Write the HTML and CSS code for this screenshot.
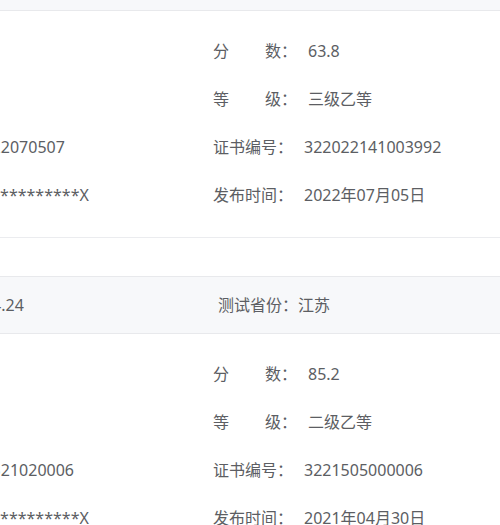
FILE: index.html
```html
<!DOCTYPE html>
<html lang="zh-CN">
<head>
<meta charset="utf-8">
<title>证书查询结果</title>
<link rel="stylesheet" href="styles.css">
</head>
<body>
<div class="page">
  <section class="card card-first">
    <div class="band">
      <div class="band-item">测试时间：2022.05.29</div>
      <div class="band-item">测试省份：江苏</div>
    </div>
    <div class="body">
      <div class="row">
        <div class="cell"><span class="lbl split"><span>姓</span><span>名：</span></span><span class="val">王雯</span></div>
        <div class="cell"><span class="lbl split"><span>分</span><span>数：</span></span><span class="val">63.8</span></div>
      </div>
      <div class="row">
        <div class="cell"><span class="lbl split"><span>性</span><span>别：</span></span><span class="val">女</span></div>
        <div class="cell"><span class="lbl split"><span>等</span><span>级：</span></span><span class="val">三级乙等</span></div>
      </div>
      <div class="row">
        <div class="cell"><span class="lbl">准考证号：</span><span class="val num">322022070507</span></div>
        <div class="cell"><span class="lbl">证书编号：</span><span class="val num">322022141003992</span></div>
      </div>
      <div class="row">
        <div class="cell"><span class="lbl">身份证号：</span><span class="val num">320***********X</span></div>
        <div class="cell"><span class="lbl">发布时间：</span><span class="val num">2022年07月05日</span></div>
      </div>
    </div>
  </section>

  <section class="card">
    <div class="band">
      <div class="band-item">测试时间：2021.04.24</div>
      <div class="band-item">测试省份：江苏</div>
    </div>
    <div class="body">
      <div class="row">
        <div class="cell"><span class="lbl split"><span>姓</span><span>名：</span></span><span class="val">王雯</span></div>
        <div class="cell"><span class="lbl split"><span>分</span><span>数：</span></span><span class="val">85.2</span></div>
      </div>
      <div class="row">
        <div class="cell"><span class="lbl split"><span>性</span><span>别：</span></span><span class="val">女</span></div>
        <div class="cell"><span class="lbl split"><span>等</span><span>级：</span></span><span class="val">二级乙等</span></div>
      </div>
      <div class="row">
        <div class="cell"><span class="lbl">准考证号：</span><span class="val num">3221521020006</span></div>
        <div class="cell"><span class="lbl">证书编号：</span><span class="val num">3221505000006</span></div>
      </div>
      <div class="row">
        <div class="cell"><span class="lbl">身份证号：</span><span class="val num">320***********X</span></div>
        <div class="cell"><span class="lbl">发布时间：</span><span class="val num">2021年04月30日</span></div>
      </div>
    </div>
  </section>
</div>
</body>
</html>
```

FILE: styles.css
```css
html, body {
  margin: 0;
  padding: 0;
  background: #ffffff;
  overflow: hidden;
}

body {
  width: 500px;
  height: 525px;
  font-family: "Noto Sans", "Noto Sans CJK SC", sans-serif;
  font-size: 16px;
  color: #5c5e63;
}

.page {
  width: 698px;
  margin-left: -136px;
}

.card {
  margin-top: 38px;
  border-bottom: 1px solid #ebecef;
}

.card-first {
  margin-top: -47px;
}

.band {
  height: 56px;
  background: #f7f8fa;
  border-top: 1px solid #e8e9ec;
  border-bottom: 1px solid #e8e9ec;
  display: grid;
  grid-template-columns: 356px 1fr;
  align-items: center;
  margin-left: -2px;
}

.band-item {
  white-space: nowrap;
  line-height: 24px;
}

.body {
  padding: 16px 0 18px;
}

.row {
  display: grid;
  grid-template-columns: 349px 349px;
  height: 48px;
  align-items: center;
}

.cell {
  display: flex;
  align-items: center;
  gap: 11px;
  white-space: nowrap;
  line-height: 24px;
}

.lbl {
  flex: none;
}

.lbl.split {
  width: 84px;
  display: flex;
  justify-content: space-between;
}

.val {
  flex: none;
}
```
